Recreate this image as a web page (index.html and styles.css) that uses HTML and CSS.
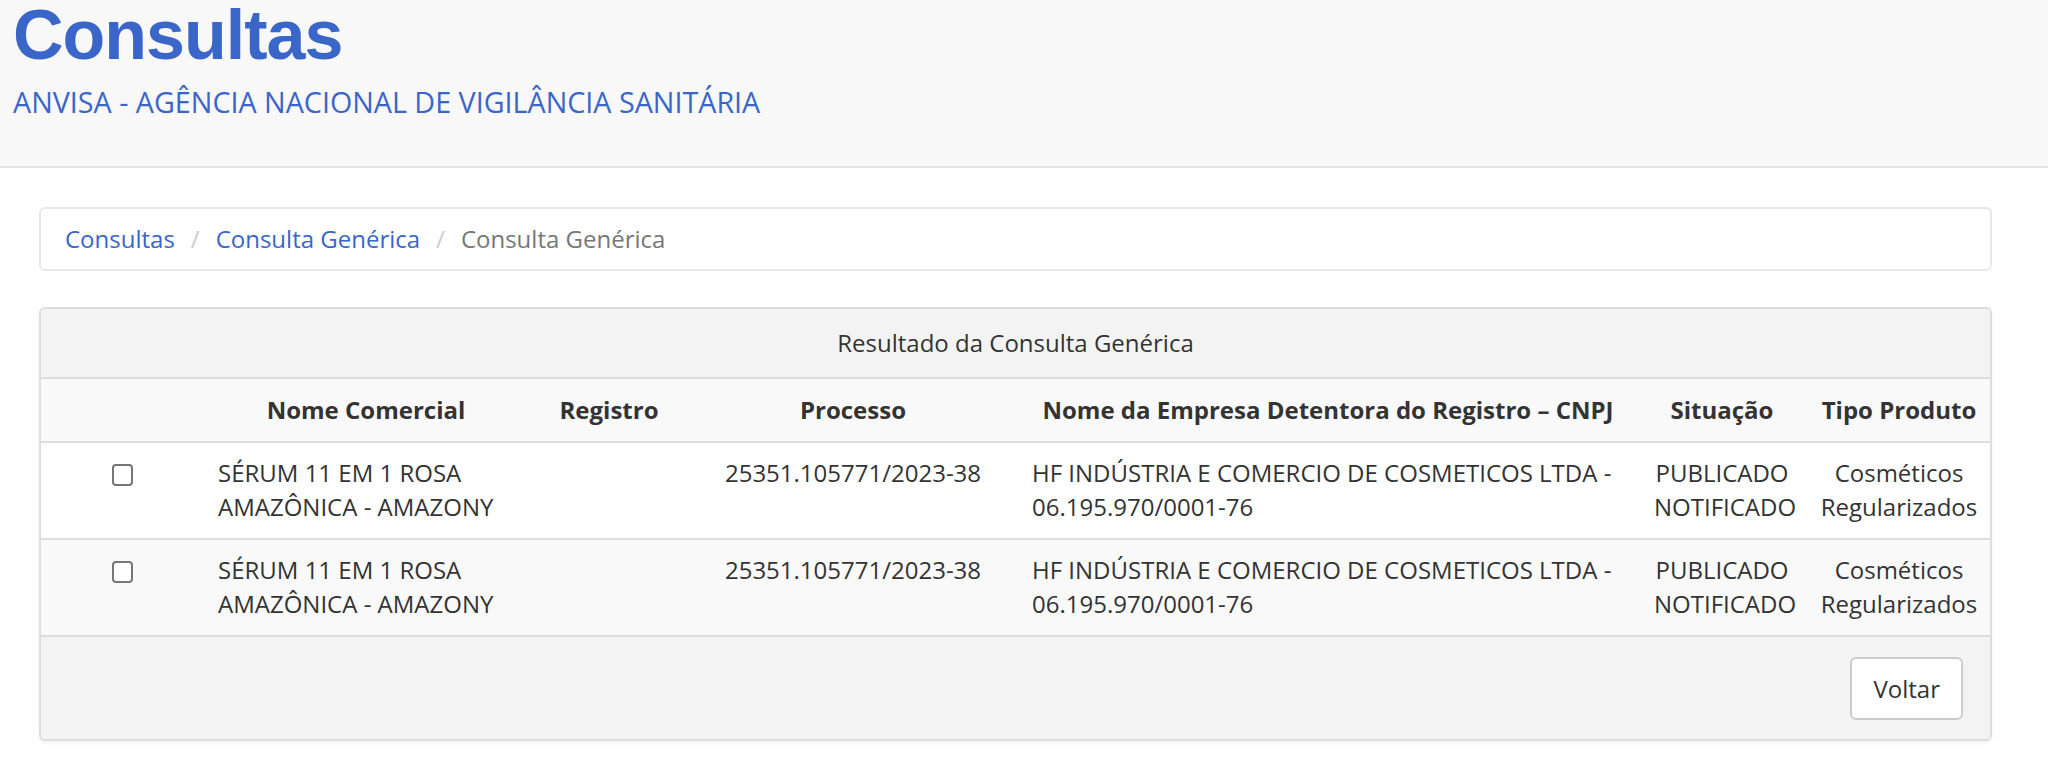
FILE: index.html
```html
<!DOCTYPE html>
<html lang="pt-BR">
<head>
<meta charset="utf-8">
<title>Consultas - ANVISA</title>
<link rel="stylesheet" href="styles.css">
</head>
<body>
<header class="page-header">
  <h1 class="title">Consultas</h1>
  <p class="subtitle">ANVISA - AGÊNCIA NACIONAL DE VIGILÂNCIA SANITÁRIA</p>
</header>
<main class="content">
  <nav class="breadcrumb">
    <a href="#" class="crumb-link">Consultas</a>
    <span class="sep">/</span>
    <a href="#" class="crumb-link">Consulta Genérica</a>
    <span class="sep">/</span>
    <span class="crumb-active">Consulta Genérica</span>
  </nav>
  <section class="panel">
    <div class="panel-heading">Resultado da Consulta Genérica</div>
    <table class="results">
      <colgroup>
        <col class="c-check">
        <col class="c-nome">
        <col class="c-reg">
        <col class="c-proc">
        <col class="c-emp">
        <col class="c-sit">
        <col class="c-tipo">
      </colgroup>
      <thead>
        <tr>
          <th></th>
          <th>Nome Comercial</th>
          <th>Registro</th>
          <th>Processo</th>
          <th>Nome da Empresa Detentora do Registro – CNPJ</th>
          <th>Situação</th>
          <th>Tipo Produto</th>
        </tr>
      </thead>
      <tbody>
        <tr>
          <td class="t-check"><input type="checkbox" class="chk"></td>
          <td>SÉRUM 11 EM 1 ROSA AMAZÔNICA - AMAZONY</td>
          <td></td>
          <td class="t-center">25351.105771/2023-38</td>
          <td>HF INDÚSTRIA E COMERCIO DE COSMETICOS LTDA - 06.195.970/0001-76</td>
          <td class="t-center">PUBLICADO NOTIFICADO</td>
          <td class="t-center">Cosméticos Regularizados</td>
        </tr>
        <tr class="alt">
          <td class="t-check"><input type="checkbox" class="chk"></td>
          <td>SÉRUM 11 EM 1 ROSA AMAZÔNICA - AMAZONY</td>
          <td></td>
          <td class="t-center">25351.105771/2023-38</td>
          <td>HF INDÚSTRIA E COMERCIO DE COSMETICOS LTDA - 06.195.970/0001-76</td>
          <td class="t-center">PUBLICADO NOTIFICADO</td>
          <td class="t-center">Cosméticos Regularizados</td>
        </tr>
      </tbody>
    </table>
    <div class="panel-footer">
      <button type="button" class="btn">Voltar</button>
    </div>
  </section>
</main>
</body>
</html>
```

FILE: styles.css
```css
* { box-sizing: border-box; }

html, body {
  margin: 0;
  padding: 0;
  background: #ffffff;
  font-family: "Open Sans", "Liberation Sans", sans-serif;
  font-size: 24px;
  line-height: 34px;
  color: #333333;
}

.page-header {
  background: #f8f8f8;
  border-bottom: 2px solid #e6e6e6;
  padding: 1px 13px 47px;
}

.title {
  margin: 0;
  font-family: "Liberation Sans", Arial, sans-serif;
  font-weight: 700;
  font-size: 70px;
  line-height: 68px;
  letter-spacing: -1px;
  color: #3a66c9;
}

.subtitle {
  margin: 16px 0 0;
  font-size: 28.7px;
  line-height: 34px;
  color: #3a66c9;
}

.content {
  padding: 39px 56px 20px 39px;
}

.breadcrumb {
  display: flex;
  align-items: center;
  gap: 16px;
  height: 64px;
  padding: 0 24px;
  background: #ffffff;
  border: 2px solid #e8e8e8;
  border-radius: 6px;
  margin-bottom: 36px;
}

.crumb-link {
  color: #3a66c9;
  text-decoration: none;
}

.sep { color: #cccccc; }

.crumb-active { color: #777777; }

.panel {
  border: 2px solid #dddddd;
  border-radius: 6px;
  overflow: hidden;
  box-shadow: 0 2px 3px rgba(0, 0, 0, 0.06);
}

.panel-heading {
  background: #f3f3f3;
  border-bottom: 2px solid #dddddd;
  text-align: center;
  padding: 17px 15px 17px;
}

.results {
  width: 100%;
  border-collapse: collapse;
  table-layout: fixed;
}

.c-check { width: 162px; }
.c-nome { width: 326px; }
.c-reg { width: 160px; }
.c-proc { width: 328px; }
.c-emp { width: 622px; }
.c-sit { width: 166px; }
.c-tipo { width: 188px; }

.results th {
  background: #f9f9f9;
  font-weight: 700;
  text-align: center;
  padding: 14px 15px 14px;
  border-bottom: 2px solid #dddddd;
}

.results td {
  padding: 13px 15px 14px;
  vertical-align: top;
  border-bottom: 2px solid #dddddd;
  text-align: left;
}

.results td.t-center { text-align: center; }

.results td.t-check {
  text-align: center;
  padding-top: 21px;
}

.results tr.alt td { background: #f9f9f9; }

.chk {
  appearance: none;
  -webkit-appearance: none;
  display: inline-block;
  width: 21px;
  height: 22px;
  margin: 0;
  border: 2px solid #767676;
  border-radius: 4px;
  background: #ffffff;
  vertical-align: top;
}

.panel-footer {
  background: #f3f3f3;
  display: flex;
  justify-content: flex-end;
  padding: 20px 27px 19px;
}

.btn {
  font-family: "Open Sans", "Liberation Sans", sans-serif;
  font-size: 24px;
  line-height: 34px;
  color: #333333;
  background: #ffffff;
  border: 2px solid #cccccc;
  border-radius: 6px;
  padding: 12px 21px;
  height: 63px;
}
```
